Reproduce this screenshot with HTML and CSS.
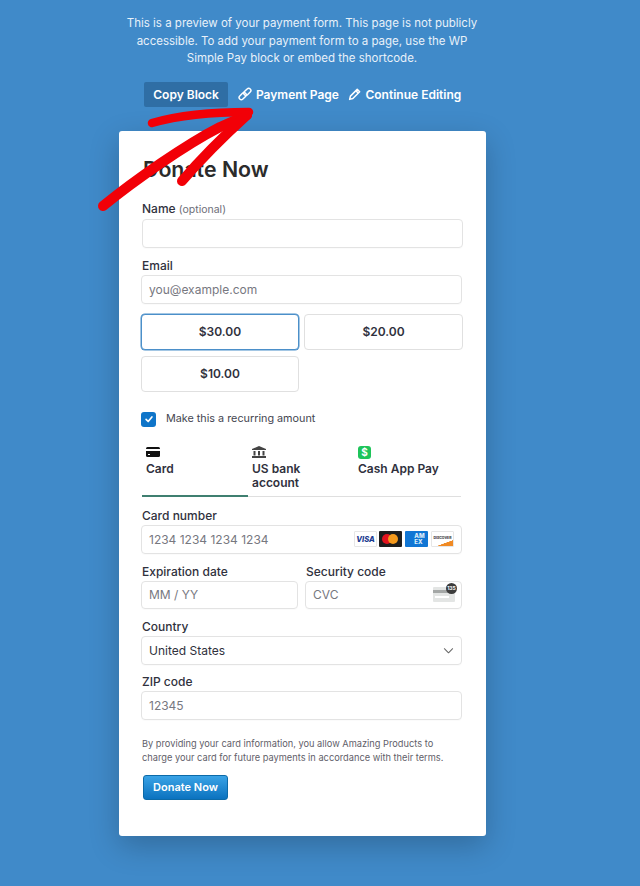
FILE: index.html
```html
<!DOCTYPE html>
<html lang="en">

<head>
    <meta charset="UTF-8">
    <meta name="viewport" content="width=device-width, initial-scale=1.0">
    <title>Donate Now</title>
    <link rel="stylesheet" href="styles.css">
</head>

<body>
    <div class="notice">
        <p>This is a preview of your payment form. This page is not publicly accessible. To add your payment form to a page, use the WP Simple Pay block or embed the shortcode.</p>
        <div class="actions">
            <a class="copy-btn">Copy Block</a>
            <a class="action-link">
                <svg width="14" height="14" viewBox="0 0 24 24" fill="none" stroke="#fff" stroke-width="2.500"><rect x="1" y="12" width="14" height="7.500" rx="3.750" transform="rotate(-45 8 15.750)"/><rect x="9" y="4.500" width="14" height="7.500" rx="3.750" transform="rotate(-45 16 8.250)"/></svg>
                Payment Page
            </a>
            <a class="action-link">
                <svg width="13" height="13" viewBox="0 0 24 24" fill="none" stroke="#fff" stroke-width="2.800" stroke-linejoin="round"><path d="M3 21l1.500-6L17 2.500l4.500 4.500L9 19.500z"/><path d="M14.500 5l4.500 4.500"/></svg>
                Continue Editing
            </a>
        </div>
    </div>

    <div class="card">
        <h1>Donate Now</h1>

        <div class="form-group name-group">
            <label>Name <span class="optional">(optional)</span></label>
            <div class="input"></div>
        </div>

        <div class="form-group">
            <label>Email</label>
            <div class="input placeholder">you@example.com</div>
        </div>

        <div class="amounts">
            <button class="amount selected">$30.00</button>
            <button class="amount">$20.00</button>
            <button class="amount">$10.00</button>
        </div>

        <div class="recurring">
            <span class="checkbox">
                <svg width="10" height="10" viewBox="0 0 12 12" fill="none" stroke="#fff" stroke-width="2" stroke-linecap="round" stroke-linejoin="round"><path d="M2.500 6.500l2.500 2.500 4.500-5.500"/></svg>
            </span>
            Make this a recurring amount
        </div>

        <div class="tabs">
            <div class="tab active">
                <svg class="tab-icon" width="14" height="12" viewBox="0 0 14 12"><rect y="1" width="14" height="10" rx="1.500" fill="#111"/><rect y="3" width="14" height="2" fill="#fff"/><rect x="2" y="8" width="2" height="1" fill="#fff"/></svg>
                <span>Card</span>
            </div>
            <div class="tab">
                <svg class="tab-icon" width="14" height="12" viewBox="0 0 14 12" fill="#444"><path d="M7 0l7 3v1H0V3z"/><rect x="1.500" y="5" width="2" height="4.500"/><rect x="6" y="5" width="2" height="4.500"/><rect x="10.500" y="5" width="2" height="4.500"/><rect y="10" width="14" height="2"/></svg>
                <span>US bank account</span>
            </div>
            <div class="tab">
                <span class="cash-icon">$</span>
                <span>Cash App Pay</span>
            </div>
        </div>

        <div class="form-group card-number">
            <label>Card number</label>
            <div class="input placeholder with-icons">
                1234 1234 1234 1234
                <span class="brands">
                    <span class="brand visa">VISA</span>
                    <span class="brand mc"><i class="mc-red"></i><i class="mc-orange"></i></span>
                    <span class="brand amex">AM<br>EX</span>
                    <span class="brand discover">DISCOVER</span>
                </span>
            </div>
        </div>

        <div class="row">
            <div class="form-group">
                <label>Expiration date</label>
                <div class="input placeholder">MM / YY</div>
            </div>
            <div class="form-group">
                <label>Security code</label>
                <div class="input placeholder with-icons">
                    CVC
                    <span class="cvc">
                        <span class="cvc-stripe"></span>
                        <span class="cvc-line"></span>
                        <span class="cvc-badge">135</span>
                    </span>
                </div>
            </div>
        </div>

        <div class="form-group">
            <label>Country</label>
            <div class="input with-icons">
                United States
                <svg width="11" height="11" viewBox="0 0 12 12" fill="none" stroke="#666" stroke-width="1.100" stroke-linecap="round" stroke-linejoin="round"><path d="M1.500 4l4.500 4.500L10.500 4"/></svg>
            </div>
        </div>

        <div class="form-group">
            <label>ZIP code</label>
            <div class="input placeholder">12345</div>
        </div>

        <p class="terms">By providing your card information, you allow Amazing Products to charge your card for future payments in accordance with their terms.</p>

        <button class="donate-btn">Donate Now</button>
    </div>

    <!-- red hand drawn arrow on top of the screenshot -->
    <svg class="arrow" width="170" height="115" viewBox="0 0 170 115" fill="none" stroke="#f20007" stroke-linecap="round" stroke-linejoin="round">
        <path stroke-width="10" d="M8 106C40 80 90 45 125 27L152 15"/>
        <path stroke-width="8.500" d="M57 23C85 15 120 12 154 12"/>
        <path stroke-width="10" d="M87 81C105 60 130 35 152 15"/>
    </svg>
</body>

</html>
```

FILE: styles.css
```css
* {
    box-sizing: border-box;
}

html,
body {
    height: 100%;
}

body {
    margin: 0;
    position: relative;
    overflow: hidden;
    font-family: Inter, Arial, sans-serif;
    background-color: #408ac9;
    color: #30313d;
}

.notice {
    width: 370px;
    margin: 0 0 0 117px;
    padding-top: 15px;
    color: #e8f1f9;
    text-align: center;
}

.notice p {
    margin: 0;
    font-size: 11.500px;
    line-height: 17.500px;
}

.actions {
    display: flex;
    align-items: center;
    justify-content: center;
    margin-top: 14px;
    padding-left: 1px;
    font-size: 12px;
    font-weight: 600;
    color: white;
}

.copy-btn {
    padding: 0 9.500px;
    height: 25px;
    line-height: 25px;
    background-color: #2f6ea5;
    border-radius: 2px;
}

.action-link {
    display: flex;
    align-items: center;
    gap: 4px;
    margin-left: 9.500px;
}

.card {
    width: 367px;
    height: 705px;
    margin: 24px 0 0 119px;
    padding: 24px 23px 0 22px;
    background-color: white;
    border-radius: 3px;
    box-shadow: 0 10px 30px rgba(0, 0, 0, 0.22);
}

h1 {
    margin: 0 0 0 2px;
    font-size: 21.300px;
    line-height: 28px;
    font-weight: 600;
    color: #2b2b2b;
}

.form-group {
    margin-bottom: 9px;
}

.name-group {
    margin: 18px 0 10px;
}

.name-group .input {
    margin-left: 1px;
}

label {
    display: block;
    margin: 0 0 2px 1px;
    font-size: 12px;
    line-height: 15px;
    font-weight: 500;
}

.optional {
    font-size: 10.500px;
    font-weight: 400;
    color: #6d6e78;
}

.input {
    display: flex;
    align-items: center;
    width: 321px;
    height: 29px;
    padding: 0 7px;
    border: 1px solid #e3e3e3;
    border-radius: 4px;
    font-size: 12px;
    box-shadow: 0 1px 1px rgba(0, 0, 0, 0.02);
}

.row .input {
    width: 157px;
    height: 28px;
}

.placeholder {
    color: #77787f;
}

.with-icons {
    justify-content: space-between;
}

.amounts {
    display: grid;
    grid-template-columns: 158px 159px;
    gap: 6px 5px;
    margin-top: 10px;
}

.amount {
    height: 36px;
    padding: 0;
    background-color: white;
    border: 1px solid #e0e0e0;
    border-radius: 4px;
    font-family: inherit;
    font-size: 12px;
    font-weight: 600;
    color: #30313d;
}

.amount.selected {
    border-color: #4b8fc9;
    box-shadow: 0 0 0 0.500px #4b8fc9;
}

.recurring {
    display: flex;
    align-items: flex-start;
    gap: 10px;
    margin-top: 20px;
    font-size: 10.800px;
    line-height: 13px;
    color: #44454f;
}

.checkbox {
    display: flex;
    align-items: center;
    justify-content: center;
    width: 15px;
    height: 15px;
    background-color: #0f75c9;
    border-radius: 3px;
}

.tabs {
    display: flex;
    width: 319px;
    height: 51px;
    margin: 19px 0 0 1px;
    border-bottom: 1px solid #dfdfdf;
}

.tab {
    width: 106px;
    padding-left: 4px;
    font-size: 12px;
    line-height: 14px;
    font-weight: 600;
}

.tab span {
    display: block;
}

.tab.active {
    border-bottom: 2px solid #3f7f70;
    height: 51px;
}

.tab-icon {
    display: block;
    margin-bottom: 4px;
}

.tab:nth-child(2) {
    padding-right: 20px;
}

.tab:nth-child(3) {
    flex: 1;
}

.tab .cash-icon {
    width: 13px;
    height: 13px;
    margin-bottom: 3px;
    background-color: #1ec45a;
    border-radius: 3px;
    color: white;
    font-size: 10px;
    line-height: 13px;
    font-weight: 700;
    text-align: center;
}

.card-number {
    margin: 11px 0 0;
}

.brands {
    display: flex;
    gap: 2px;
}

.brand {
    display: flex;
    align-items: center;
    justify-content: center;
    position: relative;
    width: 23px;
    height: 16px;
    border-radius: 1px;
    overflow: hidden;
    font-size: 6.500px;
    font-weight: 800;
}

.visa {
    border: 1px solid #e6e6e6;
    color: #1a3a8f;
    font-style: italic;
    font-size: 7.500px;
}

.mc {
    background-color: #1e1e1e;
}

.mc i {
    position: absolute;
    top: 3px;
    width: 10px;
    height: 10px;
    border-radius: 50%;
}

.mc-red {
    left: 3px;
    background-color: #e2131f;
}

.mc-orange {
    left: 9px;
    background-color: #f59a1c;
}

.amex {
    margin-left: 1px;
    padding-left: 6px;
    background-color: #1176d4;
    color: #dcecf9;
    font-size: 6px;
    line-height: 6px;
}

.discover {
    margin-left: 1px;
    padding-bottom: 2px;
    border: 1px solid #e6e6e6;
    background: linear-gradient(160deg, #fff 72%, #f08a24 74%);
    color: #444;
    font-size: 3.500px;
}

.row {
    display: grid;
    grid-template-columns: 157px 157px;
    gap: 7px;
    margin-top: 10px;
}

.row .form-group {
    margin-bottom: 10px;
}

.cvc {
    position: relative;
    width: 22px;
    height: 15px;
    margin: 0 -1px 0 auto;
    background-color: #e3e5e4;
    border-radius: 1px;
}

.cvc-stripe {
    position: absolute;
    left: 0;
    right: 0;
    top: 3px;
    height: 3px;
    background-color: #a4a7a6;
}

.cvc-line {
    position: absolute;
    left: 2px;
    top: 9px;
    width: 14px;
    height: 2px;
    background-color: #fff;
}

.cvc-badge {
    position: absolute;
    top: -4px;
    right: -2px;
    width: 11px;
    height: 11px;
    background-color: #3c3c3c;
    border-radius: 50%;
    color: white;
    font-size: 5px;
    line-height: 11px;
    text-align: center;
    font-weight: 700;
}

.terms {
    width: 306px;
    margin: 17px 0 0 1px;
    font-size: 9.250px;
    line-height: 14px;
    color: #5f6069;
}

.donate-btn {
    display: block;
    width: 85px;
    height: 25px;
    margin: 10px 0 0 2px;
    padding: 0;
    background: linear-gradient(#3aa3e6, #0b72bf);
    border: 1px solid #0c6aa8;
    border-radius: 3px;
    color: white;
    font-family: inherit;
    font-size: 11px;
    font-weight: 600;
}

.arrow {
    position: absolute;
    left: 95px;
    top: 100px;
}
```
